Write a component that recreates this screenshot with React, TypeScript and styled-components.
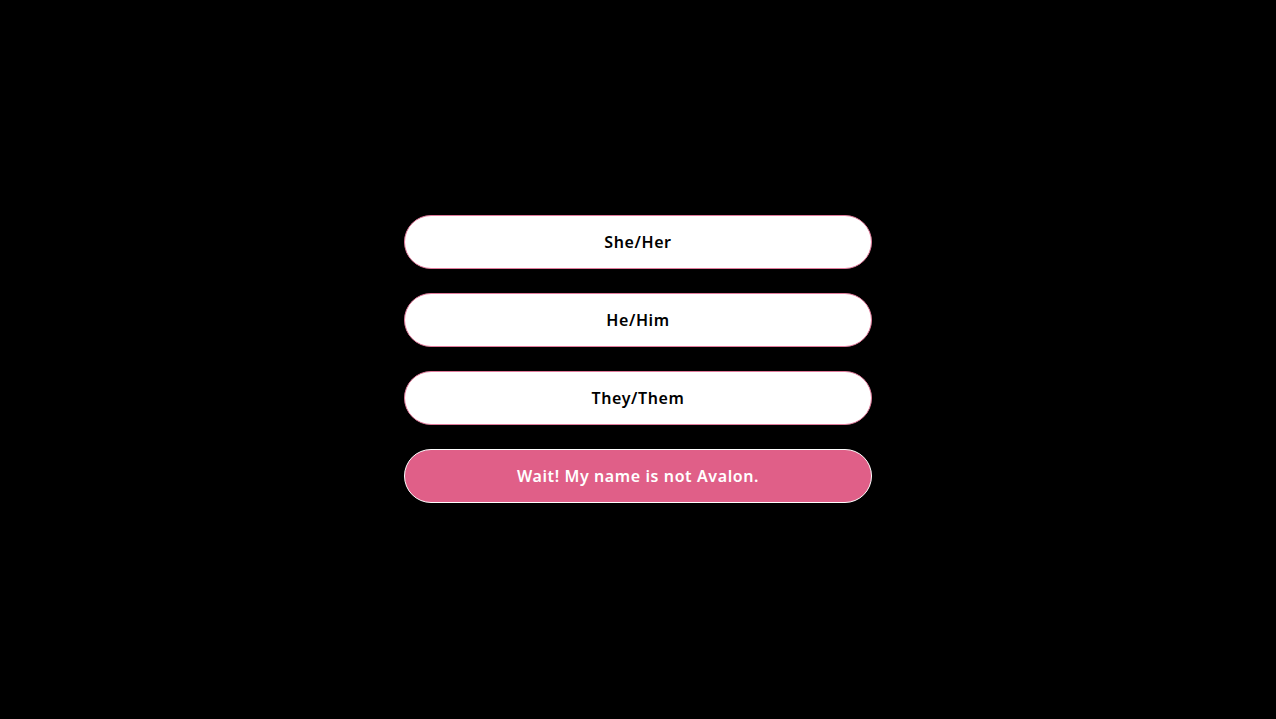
import styled, { createGlobalStyle } from "styled-components";

const Global = createGlobalStyle`
  html, body {
    margin: 0;
    background: #000;
    height: 100%;
  }
  #root {
    height: 100%;
  }
`;

const Page = styled.div`
  height: 719px;
  display: flex;
  align-items: center;
  justify-content: center;
  background: #000;
`;

const Options = styled.div`
  display: flex;
  flex-direction: column;
  gap: 24px;
  width: 468px;
  margin-top: -1px;
`;

const Option = styled.button<{ $accent?: boolean }>`
  height: 54px;
  width: 100%;
  border-radius: 27px;
  border: 1px solid ${({ $accent }) => ($accent ? "#ffffff" : "#e07a9b")};
  background: ${({ $accent }) => ($accent ? "#e05f88" : "#ffffff")};
  color: ${({ $accent }) => ($accent ? "#ffffff" : "#000000")};
  font-family: "Noto Sans", "Open Sans", sans-serif;
  font-size: 16px;
  font-weight: 600;
  letter-spacing: 0.6px;
  cursor: pointer;
  padding: 0;
`;

const options = ["She/Her", "He/Him", "They/Them"];

export default function App() {
  return (
    <>
      <Global />
      <Page>
        <Options>
          {options.map((o) => (
            <Option key={o}>{o}</Option>
          ))}
          <Option $accent>Wait! My name is not Avalon.</Option>
        </Options>
      </Page>
    </>
  );
}
